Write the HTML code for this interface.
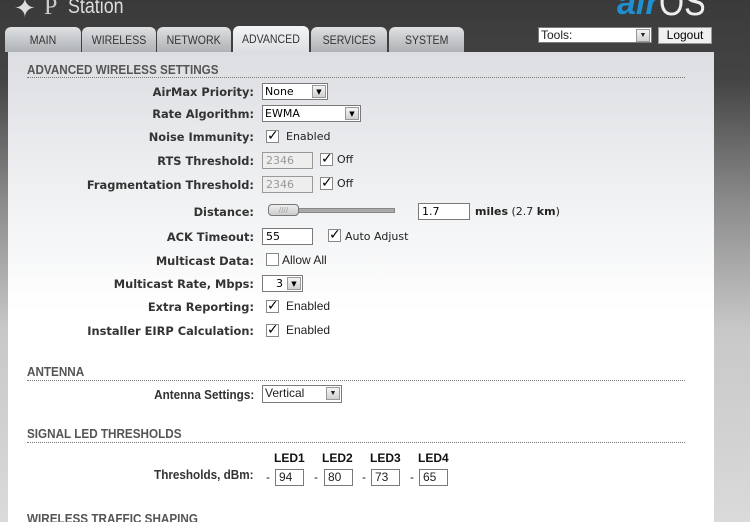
<!DOCTYPE html>
<html><head><meta charset="utf-8"><style>
*{margin:0;padding:0;box-sizing:border-box}
html,body{width:750px;height:522px;overflow:hidden}
body{position:relative;font-family:"DejaVu Sans",Verdana,sans-serif;background:linear-gradient(#3a3a3a 0px,#444 80px,#8a8a8a 200px,#c8c8c8 330px,#dadada 522px)}
.a{position:absolute;white-space:nowrap}
.panel{position:absolute;left:8px;top:52px;width:706px;height:480px;background:linear-gradient(#dcdee2 0px,#eceef0 120px,#fff 260px,#fff)}
.tab{position:absolute;top:27px;height:25px;border-radius:6px 6px 0 0;background:linear-gradient(#dfe1e3,#aeb1b5);font-family:"Liberation Sans",sans-serif;font-size:12px;color:#333;text-align:center;line-height:27px}
.tab span{display:inline-block;transform:scaleX(.88)}
.tab.on{background:linear-gradient(#f4f5f6,#dcdee2);top:26px;height:26px}
.lbl{position:absolute;right:496px;font-weight:bold;font-size:11.4px;color:#333;white-space:nowrap}
.h{position:absolute;left:27px;font-family:"Liberation Sans",sans-serif;font-weight:bold;font-size:13px;color:#555;transform:scaleX(.9);transform-origin:left;white-space:nowrap}
.dot{position:absolute;left:27px;width:658px;border-top:1px dotted #777}
.sel{position:absolute;height:17px;border:1px solid #7a7a7a;background:#fff;font-size:11px;color:#000;padding-left:2px;line-height:15px}
.sel i{position:absolute;right:1px;top:1px;width:14px;height:13px;background:linear-gradient(#f4f4f4,#d0d0d0);border:1px solid #999;font-style:normal;font-size:7px;text-align:center;line-height:12px}
.inp{position:absolute;height:17px;border:1px solid #7a7a7a;background:#fff;font-size:11px;padding-left:3px;line-height:15px}
.dis{background:#eee;color:#999;border-color:#999}
.cb{position:absolute;width:13px;height:13px;border:1px solid #888;background:#fff;font-size:14px;line-height:11px;text-align:center;color:#000;font-weight:bold}
.t{position:absolute;font-size:11px;color:#222;white-space:nowrap}
.c{font-family:"Liberation Sans",sans-serif;font-size:12px;color:#222}
</style></head><body>
<div class="a" style="left:14px;top:-6px;font-family:'Liberation Serif',serif;font-size:26px;color:#ddd">✦</div>
<div class="a" style="left:44px;top:-6px;font-family:'Liberation Serif',serif;font-size:24px;color:#ccc">P</div>
<div class="a" style="left:68px;top:-5px;font-family:'Liberation Sans',sans-serif;font-size:21px;color:#ddd;transform:scaleX(.85);transform-origin:left">Station</div>
<div class="a" style="left:617px;top:-16px;font-family:'Liberation Sans',sans-serif;font-size:34px;font-style:italic;font-weight:bold;color:#1e90d0">air</div>
<div class="a" style="left:659px;top:-18px;font-family:'Liberation Sans',sans-serif;font-size:38px;color:#eee;transform:scaleX(.85);transform-origin:left">OS</div>

<div class="tab" style="left:5px;width:76px"><span>MAIN</span></div>
<div class="tab" style="left:82px;width:74px"><span>WIRELESS</span></div>
<div class="tab" style="left:157px;width:74px"><span>NETWORK</span></div>
<div class="tab on" style="left:233px;width:76px"><span>ADVANCED</span></div>
<div class="tab" style="left:311px;width:76px"><span>SERVICES</span></div>
<div class="tab" style="left:389px;width:75px"><span>SYSTEM</span></div>

<div class="sel c" style="left:538px;top:27px;width:114px;height:16px;line-height:14px">Tools:<i>▼</i></div>
<div class="a c" style="left:658px;top:27px;width:54px;height:17px;background:#f0f0f0;border:1px solid #999;text-align:center;line-height:15px;color:#000">Logout</div>

<div class="panel"></div>

<div class="h" style="top:62px">ADVANCED WIRELESS SETTINGS</div>
<div class="dot" style="top:77px"></div>

<div class="lbl" style="top:85px">AirMax Priority:</div>
<div class="sel" style="left:262px;top:83px;width:66px">None<i>▼</i></div>
<div class="lbl" style="top:107px">Rate Algorithm:</div>
<div class="sel" style="left:262px;top:105px;width:99px">EWMA<i>▼</i></div>
<div class="lbl" style="top:130px">Noise Immunity:</div>
<div class="cb" style="left:266px;top:130px">✓</div><div class="t" style="left:286px;top:130px">Enabled</div>
<div class="lbl" style="top:154px">RTS Threshold:</div>
<div class="inp dis" style="left:262px;top:152px;width:51px">2346</div>
<div class="cb" style="left:320px;top:153px">✓</div><div class="t" style="left:337px;top:153px">Off</div>
<div class="lbl" style="top:178px">Fragmentation Threshold:</div>
<div class="inp dis" style="left:262px;top:176px;width:51px">2346</div>
<div class="cb" style="left:320px;top:177px">✓</div><div class="t" style="left:337px;top:177px">Off</div>
<div class="lbl" style="top:205px">Distance:</div>
<div class="a" style="left:296px;top:208px;width:99px;height:5px;background:#aaa;border:1px solid #888"></div>
<div class="a" style="left:268px;top:204px;width:31px;height:12px;border:1px solid #777;border-radius:4px;background:linear-gradient(#eee,#ccc);font-size:7px;color:#999;text-align:center;line-height:10px">////</div>
<div class="inp" style="left:418px;top:203px;width:52px">1.7</div>
<div class="t" style="left:475px;top:205px"><b>miles</b> (2.7 <b>km</b>)</div>
<div class="lbl" style="top:230px">ACK Timeout:</div>
<div class="inp" style="left:262px;top:228px;width:51px">55</div>
<div class="cb" style="left:328px;top:229px">✓</div><div class="t" style="left:345px;top:230px">Auto Adjust</div>
<div class="lbl" style="top:254px">Multicast Data:</div>
<div class="cb" style="left:266px;top:253px"></div><div class="t c" style="left:282px;top:253px">Allow All</div>
<div class="lbl" style="top:277px">Multicast Rate, Mbps:</div>
<div class="sel" style="left:262px;top:275px;width:41px;text-align:right;padding-right:19px">3<i>▼</i></div>
<div class="lbl" style="top:300px">Extra Reporting:</div>
<div class="cb" style="left:266px;top:300px">✓</div><div class="t c" style="left:286px;top:299px">Enabled</div>
<div class="lbl" style="top:324px">Installer EIRP Calculation:</div>
<div class="cb" style="left:266px;top:324px">✓</div><div class="t c" style="left:286px;top:323px">Enabled</div>

<div class="h" style="top:364px">ANTENNA</div>
<div class="dot" style="top:380px"></div>
<div class="lbl" style="top:387px;font-family:'Liberation Sans',sans-serif;font-size:13px;transform:scaleX(.9);transform-origin:right">Antenna Settings:</div>
<div class="sel c" style="left:262px;top:385px;width:80px;height:18px">Vertical<i>▼</i></div>

<div class="h" style="top:426px">SIGNAL LED THRESHOLDS</div>
<div class="dot" style="top:442px"></div>
<div class="t" style="left:274px;top:451px;font-family:'Liberation Sans',sans-serif;font-size:12px;font-weight:bold;color:#111">LED1</div>
<div class="t" style="left:322px;top:451px;font-family:'Liberation Sans',sans-serif;font-size:12px;font-weight:bold;color:#111">LED2</div>
<div class="t" style="left:370px;top:451px;font-family:'Liberation Sans',sans-serif;font-size:12px;font-weight:bold;color:#111">LED3</div>
<div class="t" style="left:418px;top:451px;font-family:'Liberation Sans',sans-serif;font-size:12px;font-weight:bold;color:#111">LED4</div>
<div class="lbl" style="top:467px;font-family:'Liberation Sans',sans-serif;font-size:13px;transform:scaleX(.9);transform-origin:right">Thresholds, dBm:</div>
<div class="t c" style="left:266px;top:470px">-</div><div class="inp c" style="left:275px;top:469px;width:29px">94</div>
<div class="t c" style="left:314px;top:470px">-</div><div class="inp c" style="left:324px;top:469px;width:29px">80</div>
<div class="t c" style="left:362px;top:470px">-</div><div class="inp c" style="left:371px;top:469px;width:29px">73</div>
<div class="t c" style="left:410px;top:470px">-</div><div class="inp c" style="left:419px;top:469px;width:29px">65</div>

<div class="h" style="top:511px">WIRELESS TRAFFIC SHAPING</div>
</body></html>
